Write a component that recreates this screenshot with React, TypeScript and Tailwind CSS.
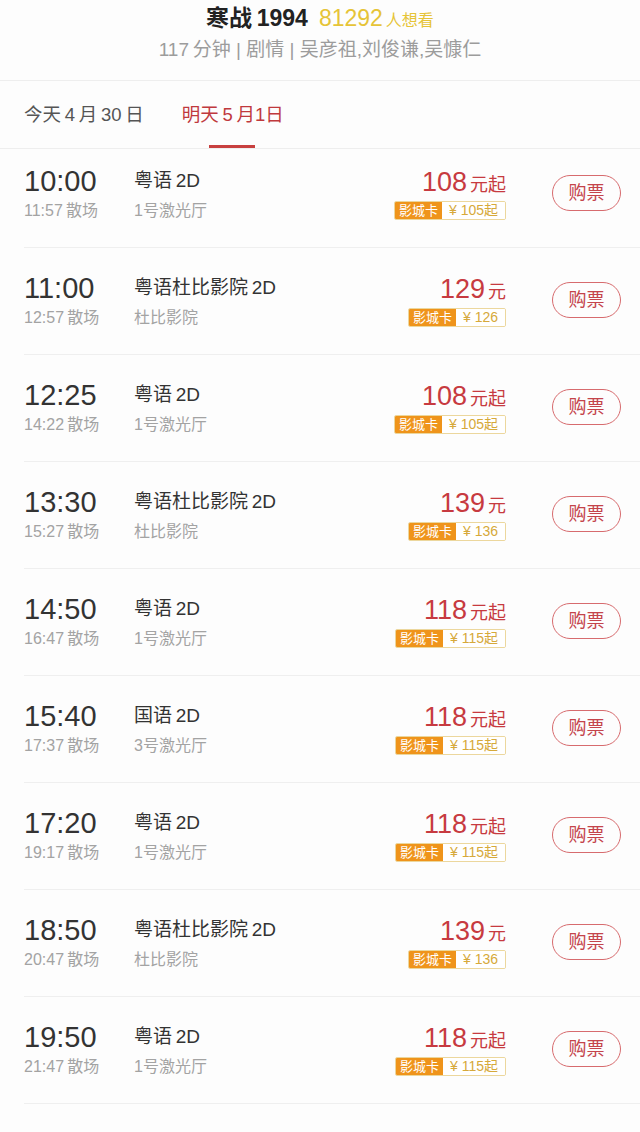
import React from "react";

interface Show {
  start: string;
  end: string;
  lang: string;
  hall: string;
  price: string;
  from: boolean;
  card: string;
}

const shows: Show[] = [
  { start: "10:00", end: "11:57", lang: "粤语\u20092D", hall: "1号激光厅", price: "108", from: true, card: "105" },
  { start: "11:00", end: "12:57", lang: "粤语杜比影院\u20092D", hall: "杜比影院", price: "129", from: false, card: "126" },
  { start: "12:25", end: "14:22", lang: "粤语\u20092D", hall: "1号激光厅", price: "108", from: true, card: "105" },
  { start: "13:30", end: "15:27", lang: "粤语杜比影院\u20092D", hall: "杜比影院", price: "139", from: false, card: "136" },
  { start: "14:50", end: "16:47", lang: "粤语\u20092D", hall: "1号激光厅", price: "118", from: true, card: "115" },
  { start: "15:40", end: "17:37", lang: "国语\u20092D", hall: "3号激光厅", price: "118", from: true, card: "115" },
  { start: "17:20", end: "19:17", lang: "粤语\u20092D", hall: "1号激光厅", price: "118", from: true, card: "115" },
  { start: "18:50", end: "20:47", lang: "粤语杜比影院\u20092D", hall: "杜比影院", price: "139", from: false, card: "136" },
  { start: "19:50", end: "21:47", lang: "粤语\u20092D", hall: "1号激光厅", price: "118", from: true, card: "115" },
];

function ShowRow({ show, first }: { show: Show; first: boolean }) {
  return (
    <div className={`ml-[24px] flex items-start border-b border-[#efefef] pr-[19px] ${first ? "pt-[16px]" : "pt-[24px]"} pb-[26px]`}>
      {/* Time */}
      <div className="flex w-[110px] flex-col">
        <span className="h-[32px] text-[29px] leading-[32px] text-[#333]">{show.start}</span>
        <span className="mt-[4px] h-[20px] text-[16px] leading-[20px] text-[#a3a3a3]">{show.end}{"\u2009"}散场</span>
      </div>

      {/* Hall */}
      <div className="flex flex-1 flex-col">
        <span className="h-[32px] text-[19px] leading-[32px] text-[#333]">{show.lang}</span>
        <span className="mt-[4px] h-[20px] text-[16px] leading-[20px] text-[#a3a3a3]">{show.hall}</span>
      </div>

      {/* Price */}
      <div className="flex flex-col items-end">
        <div className="flex h-[34px] items-baseline text-[#c73a40]">
          <span className="text-[27px] leading-[34px]">{show.price}</span>
          <span className="ml-[3px] text-[18px]">{show.from ? "元起" : "元"}</span>
        </div>
        <div className="mt-[2px] flex h-[19px] overflow-hidden rounded-[2px] border border-[#ecd79d] text-[13px] leading-[17px]">
          <span className="bg-[#ef941b] px-[4px] text-white">影城卡</span>
          <span className="bg-white px-[7px] text-[14px] text-[#d6a93a]">
            ¥ {show.card}
            {show.from ? "起" : ""}
          </span>
        </div>
      </div>

      {/* Buy */}
      <button className="ml-[46px] mt-[10px] flex h-[36px] w-[69px] items-center justify-center rounded-full border-[1.5px] border-[#d76b6e] text-[18px] text-[#c4444b]">
        购票
      </button>
    </div>
  );
}

export default function App() {
  return (
    <div
      className="h-[1132px] w-[640px] overflow-hidden bg-[#fdfdfd]"
      style={{ fontFamily: '"Liberation Sans", "Noto Sans CJK SC", sans-serif' }}
    >
      {/* Header */}
      <div className="flex h-[81px] flex-col items-center border-b border-[#eeeeee] pt-[4px]">
        <div className="flex items-baseline leading-[28px]">
          <span className="text-[23px] font-bold text-[#222]">寒战{"\u2009"}1994</span>
          <span className="ml-[11px] text-[23px] text-[#e6c437]">81292</span>
          <span className="ml-[3px] text-[16px] text-[#e6c437]">人想看</span>
        </div>
        <div className="mt-[4px] text-[19px] leading-[22px] text-[#9c9c9c]">117{"\u2009"}分钟 | 剧情 | 吴彦祖,刘俊谦,吴慷仁</div>
      </div>

      {/* Date tabs */}
      <div className="flex h-[68px] items-center border-b border-[#eeeeee] pl-[24px]">
        <span className="text-[18.5px] text-[#555]">今天{"\u2009"}4{"\u2009"}月{"\u2009"}30{"\u2009"}日</span>
        <div className="relative ml-[38px] flex h-full items-center">
          <span className="text-[18.5px] text-[#c0393d]">明天{"\u2009"}5{"\u2009"}月1日</span>
          <div className="absolute bottom-0 left-[27px] h-[3px] w-[46px] bg-[#c8403f]" />
        </div>
      </div>

      {/* Show list */}
      <div className="flex flex-col">
        {shows.map((s, i) => (
          <ShowRow key={s.start} show={s} first={i === 0} />
        ))}
      </div>
    </div>
  );
}
